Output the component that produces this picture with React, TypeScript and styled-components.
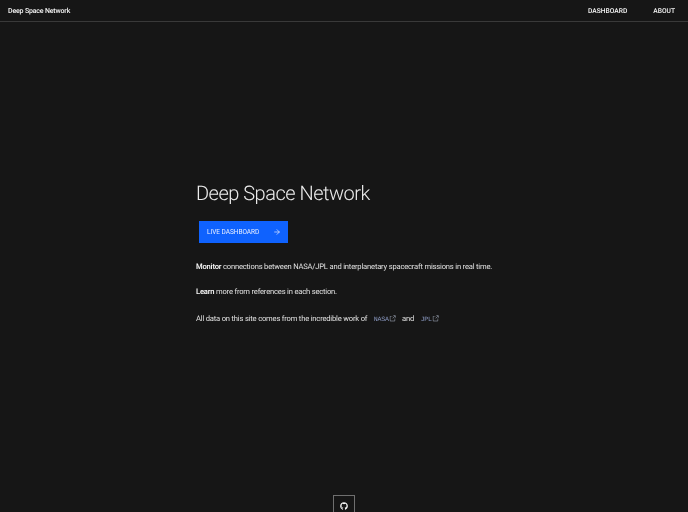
import React from "react";
import styled, { createGlobalStyle } from "styled-components";
import { ArrowRight } from "lucide-react";
import { FaGithub } from "react-icons/fa";

const Global = createGlobalStyle`
  html, body { margin: 0; padding: 0; background: #161616; height: 100%; overflow: hidden; }
  #root { height: 100%; }
  * { box-sizing: border-box; }
`;

const Page = styled.div`
  width: 688px;
  height: 512px;
  display: flex;
  flex-direction: column;
  color: #f4f4f4;
  font-family: "Roboto", "Liberation Sans", sans-serif;
  text-rendering: geometricPrecision;
  will-change: transform;
  overflow: hidden;
`;

const Header = styled.header`
  height: 22px;
  flex: none;
  display: flex;
  align-items: center;
  justify-content: space-between;
  padding: 0 13px 0 8px;
  border-bottom: 1px solid #393939;
`;

const Brand = styled.span`
  font-size: 7px;
  font-weight: 500;
  letter-spacing: -0.17px;
`;

const Nav = styled.nav`
  display: flex;
  gap: 26px;
`;

const NavItem = styled.span`
  font-size: 6.7px;
  font-weight: 500;
  letter-spacing: 0;
`;

const Main = styled.main`
  flex: 1;
  display: flex;
  flex-direction: column;
  padding: 159px 0 0 196px;
`;

const Title = styled.h1`
  margin: 0;
  font-size: 20px;
  line-height: 24px;
  font-weight: 300;
  letter-spacing: -0.5px;
  color: #ececec;
`;

const Cta = styled.button`
  margin: 16px 0 0 3px;
  width: 89px;
  height: 22px;
  display: flex;
  align-items: center;
  justify-content: space-between;
  padding: 0 7px 0 8px;
  background: #0f62fe;
  border: 0;
  color: #e8eeff;
  font-family: inherit;
  font-size: 6.5px;
  letter-spacing: -0.03px;
`;

const Para = styled.p<{ $top: number }>`
  margin: ${(p) => p.$top}px 0 0;
  font-size: 7.6px;
  letter-spacing: -0.19px;
  line-height: 12px;
  height: 12px;
  color: #e0e0e0;
  display: flex;
  align-items: center;
  white-space: pre;
`;

const Strong = styled.strong`
  font-weight: 600;
  color: #f4f4f4;
`;

const DocLink = styled.span`
  display: inline-flex;
  align-items: center;
  line-height: 8px;
  margin: 2px 6.5px 0 6.5px;
  color: #8a98c0;
  letter-spacing: -0.25px;
  font-family: "Liberation Mono", monospace;
  font-size: 6.6px;
`;

const LaunchIcon = styled.svg`
  width: 7px;
  height: 7px;
  margin-top: -4px;
  fill: #b4bdd0;
`;

const Footer = styled.footer`
  flex: none;
  display: flex;
  justify-content: center;
`;

const GitHubBox = styled.div`
  width: 22px;
  height: 17px;
  border: 1px solid #6f6f6f;
  border-bottom: 0;
  display: flex;
  justify-content: center;
  padding-top: 6px;
`;

const Launch = () => (
  <LaunchIcon viewBox="0 0 16 16" aria-hidden="true">
    <path d="M13 14H3c-.6 0-1-.4-1-1V3c0-.6.4-1 1-1h5v1H3v10h10V8h1v5c0 .6-.4 1-1 1z" />
    <path d="M10 1v1h3.3L8 7.3l.7.7L14 2.7V6h1V1z" />
  </LaunchIcon>
);

export default function App() {
  return (
    <Page>
      <Global />
      <Header>
        <Brand>Deep Space Network</Brand>
        <Nav>
          <NavItem>DASHBOARD</NavItem>
          <NavItem>ABOUT</NavItem>
        </Nav>
      </Header>
      <Main>
        <Title>Deep Space Network</Title>
        <Cta>
          LIVE DASHBOARD
          <ArrowRight size={8} strokeWidth={2} />
        </Cta>
        <Para $top={18}>
          <span><Strong>Monitor</Strong> connections between NASA/JPL and interplanetary spacecraft missions in real time.</span>
        </Para>
        <Para $top={13}>
          <span><Strong>Learn</Strong> more from references in each section.</span>
        </Para>
        <Para $top={15}>
          All data on this site comes from the incredible work of
          <DocLink>NASA<Launch /></DocLink>
          and
          <DocLink>JPL<Launch /></DocLink>
        </Para>
      </Main>
      <Footer>
        <GitHubBox>
          <FaGithub size={8} color="#f4f4f4" />
        </GitHubBox>
      </Footer>
    </Page>
  );
}
